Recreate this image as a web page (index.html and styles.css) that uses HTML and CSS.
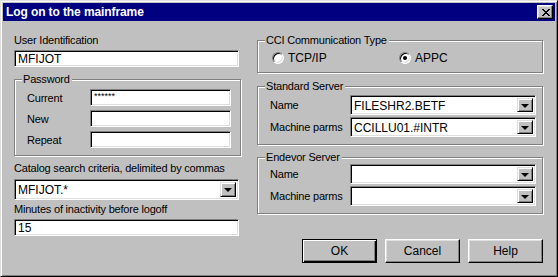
FILE: index.html
```html
<!DOCTYPE html>
<html lang="en">
<head>
    <meta charset="UTF-8">
    <title>Log on to the mainframe</title>
    <link rel="stylesheet" href="styles.css">
</head>
<body>

    <div class="window">
        <div class="titlebar">
            <span class="title">Log on to the mainframe</span>
            <div class="close-button">
                <svg width="8" height="7" viewBox="0 0 8 7">
                    <path d="M0 0h2v1h-2zM6 0h2v1h-2zM1 1h2v1h-2zM5 1h2v1h-2zM2 2h4v1h-4zM3 3h2v1h-2zM2 4h4v1h-4zM1 5h2v1h-2zM5 5h2v1h-2zM0 6h2v1h-2zM6 6h2v1h-2z" fill="#000"/>
                </svg>
            </div>
        </div>

        <div class="dialog-body">
            <!-- левая колонка -->
            <div class="col-left">
                <div class="label first-label">User Identification</div>
                <div class="edit wide">MFIJOT</div>

                <div class="group password-group">
                    <span class="group-title">Password</span>
                    <div class="field-row">
                        <span class="row-label">Current</span>
                        <div class="edit password">******</div>
                    </div>
                    <div class="field-row">
                        <span class="row-label">New</span>
                        <div class="edit password"></div>
                    </div>
                    <div class="field-row">
                        <span class="row-label">Repeat</span>
                        <div class="edit password"></div>
                    </div>
                </div>

                <div class="label catalog-label">Catalog search criteria, delimited by commas</div>
                <div class="combo wide tall">
                    <span class="combo-text">MFIJOT.*</span>
                    <span class="drop-button"><span class="arrow"></span></span>
                </div>

                <div class="label minutes-label">Minutes of inactivity before logoff</div>
                <div class="edit wide minutes">15</div>
            </div>

            <!-- правая колонка -->
            <div class="col-right">
                <div class="group cci-group">
                    <span class="group-title">CCI Communication Type</span>
                    <div class="radio-option first-option">
                        <span class="radio"></span>
                        <span>TCP/IP</span>
                    </div>
                    <div class="radio-option">
                        <span class="radio checked"></span>
                        <span>APPC</span>
                    </div>
                </div>

                <div class="group server-group standard">
                    <span class="group-title">Standard Server</span>
                    <div class="field-row">
                        <span class="server-label">Name</span>
                        <div class="combo server-combo">
                            <span class="combo-text">FILESHR2.BETF</span>
                            <span class="drop-button"><span class="arrow"></span></span>
                        </div>
                    </div>
                    <div class="field-row">
                        <span class="server-label">Machine parms</span>
                        <div class="combo server-combo">
                            <span class="combo-text">CCILLU01.#INTR</span>
                            <span class="drop-button"><span class="arrow"></span></span>
                        </div>
                    </div>
                </div>

                <div class="group server-group endevor">
                    <span class="group-title">Endevor Server</span>
                    <div class="field-row">
                        <span class="server-label">Name</span>
                        <div class="combo server-combo">
                            <span class="combo-text"></span>
                            <span class="drop-button"><span class="arrow"></span></span>
                        </div>
                    </div>
                    <div class="field-row">
                        <span class="server-label">Machine parms</span>
                        <div class="combo server-combo">
                            <span class="combo-text"></span>
                            <span class="drop-button"><span class="arrow"></span></span>
                        </div>
                    </div>
                </div>

                <div class="button-row">
                    <div class="push-button default-button"><span>OK</span></div>
                    <div class="push-button"><span>Cancel</span></div>
                    <div class="push-button"><span>Help</span></div>
                </div>
            </div>
        </div>
    </div>

</body>
</html>
```

FILE: styles.css
```css
body {
    margin: 0;
    background: #c0c0c0;
    font-family: "Liberation Sans", Arial, sans-serif;
    font-size: 11px;
    color: #000;
}
.window {
    width: 558px;
    height: 277px;
    box-sizing: border-box;
    background: #c0c0c0;
    border: 1px solid;
    border-color: #dfdfdf #000 #000 #dfdfdf;
    box-shadow: inset 1px 1px #fff, inset -1px -1px #808080;
    padding: 2px;
}
.titlebar {
    height: 18px;
    background: #000080;
    display: flex;
    align-items: center;
    justify-content: space-between;
    padding: 0 2px 0 3px;
}
.title {
    color: #fff;
    font-weight: bold;
    font-size: 12px;
    letter-spacing: -0.1px;
}
.close-button {
    width: 16px;
    height: 14px;
    box-sizing: border-box;
    background: #c0c0c0;
    border: 1px solid;
    border-color: #fff #000 #000 #fff;
    box-shadow: inset -1px -1px #808080, inset 1px 1px #dfdfdf;
    display: flex;
    align-items: center;
    justify-content: center;
    padding-left: 1px;
}
.close-button svg {
    display: block;
}
.dialog-body {
    display: flex;
    padding-left: 11px;
    letter-spacing: -0.2px;
}
.col-left {
    width: 228px;
}
.col-right {
    width: 286px;
    margin-left: 15px;
}
.label {
    line-height: 13px;
    height: 13px;
    white-space: nowrap;
}
.first-label {
    margin-top: 13px;
    margin-bottom: 3px;
}
.catalog-label {
    margin-top: 6px;
    margin-bottom: 4px;
}
.minutes-label {
    margin-top: 3px;
    margin-bottom: 3px;
}
.edit {
    height: 17px;
    box-sizing: border-box;
    background: #fff;
    border: 1px solid;
    border-color: #808080 #fff #fff #808080;
    box-shadow: inset 1px 1px #000, inset -1px -1px #dfdfdf;
    padding: 0 3px;
    line-height: 16px;
    font-size: 12px;
    letter-spacing: 0;
    white-space: nowrap;
}
.wide {
    width: 225px;
}
.password {
    width: 141px;
    font-size: 9px;
    line-height: 12px;
}
.group {
    position: relative;
    box-sizing: border-box;
    border: 1px solid #808080;
    box-shadow: inset 1px 1px #fff, 1px 1px #fff;
}
.group-title {
    position: absolute;
    top: -7px;
    left: 7px;
    padding: 0 2px 0 1px;
    background: #c0c0c0;
    line-height: 13px;
    white-space: nowrap;
}
.password-group {
    width: 227px;
    margin-top: 12px;
    padding: 9px 0 7px 12px;
}
.field-row {
    display: flex;
    align-items: center;
}
.password-group .field-row + .field-row {
    margin-top: 4px;
}
.row-label {
    width: 63px;
}
.combo {
    display: flex;
    height: 20px;
    box-sizing: border-box;
    background: #fff;
    border: 1px solid;
    border-color: #808080 #fff #fff #808080;
    box-shadow: inset 1px 1px #000, inset -1px -1px #dfdfdf;
    padding: 2px;
}
.combo.tall {
    height: 21px;
}
.combo-text {
    flex: 1;
    line-height: 16px;
    font-size: 12px;
    letter-spacing: 0;
    padding-left: 1px;
    white-space: nowrap;
}
.drop-button {
    width: 16px;
    box-sizing: border-box;
    background: #c0c0c0;
    border: 1px solid;
    border-color: #dfdfdf #000 #000 #dfdfdf;
    box-shadow: inset 1px 1px #fff, inset -1px -1px #808080;
    display: flex;
    align-items: center;
    justify-content: center;
}
.arrow {
    width: 0;
    height: 0;
    border-left: 4px solid transparent;
    border-right: 4px solid transparent;
    border-top: 4px solid #000;
    margin-top: 1px;
}
.cci-group {
    width: 286px;
    height: 33px;
    margin-top: 19px;
    display: flex;
    align-items: center;
    padding: 2px 0 0 14px;
}
.radio-option {
    display: flex;
    align-items: center;
    gap: 4px;
    font-size: 12px;
    letter-spacing: 0;
}
.first-option {
    width: 127px;
}
.radio {
    width: 12px;
    height: 12px;
    box-sizing: border-box;
    border-radius: 50%;
    border: 1px solid;
    border-color: #808080 #fff #fff #808080;
    background: #fff;
    box-shadow: inset 1px 1px #000, inset -1px -1px #dfdfdf;
    position: relative;
}
.radio.checked::after {
    content: "";
    position: absolute;
    left: 3px;
    top: 3px;
    width: 4px;
    height: 4px;
    border-radius: 50%;
    background: #000;
}
.server-group {
    width: 286px;
    padding: 8px 6px 7px 12px;
}
.standard {
    margin-top: 13px;
}
.endevor {
    margin-top: 12px;
    padding-top: 6px;
}
.server-group .field-row + .field-row {
    margin-top: 2px;
}
.server-label {
    width: 80px;
    white-space: nowrap;
}
.server-combo {
    width: 186px;
}
.button-row {
    display: flex;
    justify-content: flex-end;
    gap: 8px;
    margin-top: 25px;
}
.push-button {
    width: 75px;
    height: 24px;
    box-sizing: border-box;
    background: #c0c0c0;
    border: 1px solid;
    border-color: #fff #000 #000 #fff;
    box-shadow: inset -1px -1px #808080, inset 1px 1px #dfdfdf;
    display: flex;
    align-items: center;
    justify-content: center;
    font-size: 12px;
    letter-spacing: 0;
}
.default-button {
    border: 1px solid #000;
    box-shadow: inset 1px 1px #fff, inset -1px -1px #000, inset -2px -2px #808080;
}
```
